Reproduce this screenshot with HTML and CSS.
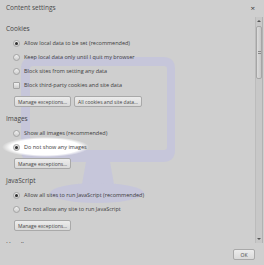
FILE: index.html
```html
<!DOCTYPE html>
<html lang="en">

<head>
    <meta charset="UTF-8">
    <title>Content settings</title>
    <link rel="stylesheet" href="styles.css">
</head>

<body>
    <svg class="watermark" width="264" height="265" viewBox="0 0 264 265">
        <path fill="#c6c6da" fill-rule="evenodd" d="M33 57H163Q175 57 175 69V150Q175 162 163 162H33Q21 162 21 150V69Q21 57 33 57Z M33 66H164Q167 66 167 69V147Q167 150 164 150H33Q30 150 30 147V69Q30 66 33 66Z" />
        <path fill="#c6c6da" d="M86 162H110L114 184H82Z" />
        <ellipse cx="97" cy="193" rx="47" ry="10" fill="#c6c6da" />
    </svg>
    <div class="dialog">
        <div class="head">
            <span class="title">Content settings</span>
            <span class="close">×</span>
        </div>
        <div class="scroller">
            <div class="content">
                <div class="section">
                    <h3>Cookies</h3>
                    <div class="row"><span class="radio on"></span>Allow local data to be set (recommended)</div>
                    <div class="row"><span class="radio"></span>Keep local data only until I quit my browser</div>
                    <div class="row"><span class="radio"></span>Block sites from setting any data</div>
                    <div class="row"><span class="check"></span>Block third-party cookies and site data</div>
                    <div class="btns">
                        <span class="btn">Manage exceptions...</span>
                        <span class="btn">All cookies and site data...</span>
                    </div>
                </div>
                <div class="section">
                    <h3>Images</h3>
                    <div class="row"><span class="radio"></span>Show all images (recommended)</div>
                    <div class="row marked"><span class="radio on"></span>Do not show any images</div>
                    <div class="btns">
                        <span class="btn">Manage exceptions...</span>
                    </div>
                </div>
                <div class="section">
                    <h3>JavaScript</h3>
                    <div class="row"><span class="radio on"></span>Allow all sites to run JavaScript (recommended)</div>
                    <div class="row"><span class="radio"></span>Do not allow any site to run JavaScript</div>
                    <div class="btns">
                        <span class="btn">Manage exceptions...</span>
                    </div>
                </div>
                <div class="section last">
                    <h3>Handlers</h3>
                </div>
            </div>
            <div class="scrollbar">
                <div class="arrow"><span class="tri up"></span></div>
                <div class="thumb"><span class="grip"></span></div>
                <div class="track"></div>
                <div class="arrow"><span class="tri down"></span></div>
            </div>
        </div>
        <div class="foot">
            <span class="btn ok">OK</span>
        </div>
    </div>
</body>

</html>
```

FILE: styles.css
```css
* {
    margin: 0;
    padding: 0;
    box-sizing: border-box;
}

body {
    width: 264px;
    height: 265px;
    overflow: hidden;
    background: #cfcfcf;
    font-family: "Open Sans", "Liberation Sans", sans-serif;
    color: #3c3c3c;
}

.watermark {
    position: absolute;
    left: 0;
    top: 0;
    z-index: -2;
}

.dialog {
    display: flex;
    flex-direction: column;
    height: 265px;
}

.head {
    height: 17px;
    display: flex;
    align-items: center;
    justify-content: space-between;
    padding: 0 9px 1px 6px;
}

.title {
    font-size: 6.5px;
    line-height: 10px;
    color: #4a4a4a;
}

.close {
    font-size: 8px;
    line-height: 10px;
    color: #3a3a3a;
}

.scroller {
    height: 226px;
    display: flex;
}

.content {
    flex: 1;
    overflow: hidden;
    padding: 7px 0 0 6px;
}

.section h3 {
    font-size: 6.5px;
    font-weight: normal;
    line-height: 10px;
    margin: 7px 0 2px;
    color: #444;
}

.section:first-child h3 {
    margin-top: 0;
}

.section.last h3 {
    margin-top: 9px;
}

.row {
    position: relative;
    display: flex;
    align-items: center;
    height: 14px;
    padding-left: 7px;
    font-size: 5.5px;
    white-space: nowrap;
}

.row.marked::before {
    content: "";
    position: absolute;
    left: -4px;
    top: -3px;
    width: 87px;
    height: 20px;
    z-index: -1;
    background: radial-gradient(closest-side, #fff 80%, rgba(255, 255, 255, 0));
}

.radio,
.check {
    display: flex;
    align-items: center;
    justify-content: center;
    width: 7px;
    height: 7px;
    margin-right: 4px;
    border: 1px solid #a4a4a4;
    background: linear-gradient(#f0f0f0, #cdcdcd);
}

.radio {
    border-radius: 50%;
}

.check {
    border-radius: 1px;
}

.radio.on::after {
    content: "";
    width: 3px;
    height: 3px;
    border-radius: 50%;
    background: #2e2e2e;
}

.btns {
    display: flex;
    gap: 3px;
    margin-top: 4px;
    padding-left: 8px;
}

.btn {
    display: flex;
    align-items: center;
    justify-content: center;
    height: 11px;
    padding: 0 3px;
    font-size: 5px;
    white-space: nowrap;
    color: #454545;
    border: 1px solid #a9a9a9;
    border-radius: 2px;
    background: linear-gradient(#ececec, #d9d9d9);
}

.scrollbar {
    display: flex;
    flex-direction: column;
    width: 8px;
    margin-right: 1px;
    background: #c8c8c8;
    border-left: 1px solid #bcbcbc;
    border-right: 1px solid #b2b2b2;
}

.arrow {
    height: 8px;
    display: flex;
    align-items: center;
    justify-content: center;
}

.tri {
    width: 0;
    height: 0;
    border-left: 2px solid transparent;
    border-right: 2px solid transparent;
}

.tri.up {
    border-bottom: 2px solid #555;
}

.tri.down {
    border-top: 2px solid #555;
}

.thumb {
    height: 53px;
    margin-top: 1px;
    display: flex;
    align-items: center;
    justify-content: center;
    border: 1px solid #a6a6a6;
    border-radius: 2px;
    background: linear-gradient(to right, #dcdcdc, #c6c6c6);
}

.grip {
    width: 3px;
    height: 3px;
    border-top: 1px solid #888;
    border-bottom: 1px solid #888;
}

.track {
    flex: 1;
}

.foot {
    display: flex;
    justify-content: flex-end;
    padding: 6px 9px 0 0;
}

.btn.ok {
    width: 22px;
}
```
